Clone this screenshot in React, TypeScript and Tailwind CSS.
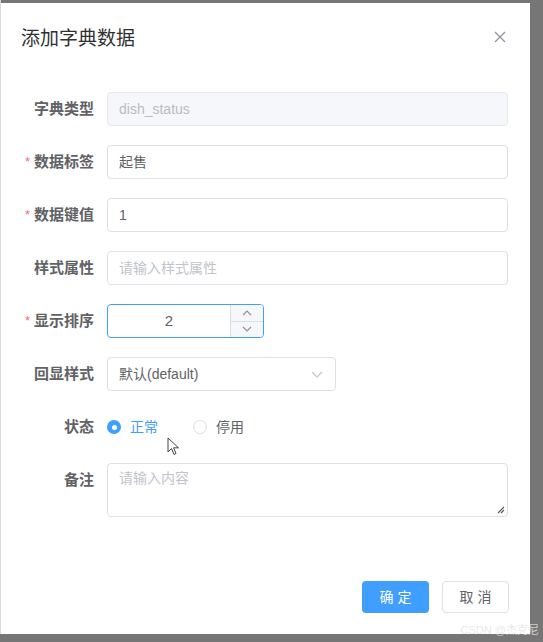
import React from "react";

const font = "font-['Liberation_Sans','Noto_Sans_CJK_SC',sans-serif]";

const Label: React.FC<{ text: string; required?: boolean }> = ({ text, required }) => (
  <div className="w-[106px] shrink-0 pr-[13px] flex justify-end items-center text-[15px] font-bold text-[#606266]">
    {required && <span className="text-[#f56c6c] mr-[4px] text-[13px] font-normal">*</span>}
    {text}
  </div>
);

const Row: React.FC<{ children: React.ReactNode; className?: string }> = ({ children, className }) => (
  <div className={"flex h-[34px] mb-[19px] " + (className || "")}>{children}</div>
);

const TextInput: React.FC<{ value?: string; placeholder?: string; disabled?: boolean }> = ({
  value,
  placeholder,
  disabled,
}) => (
  <div
    className={
      "w-[401px] h-[34px] rounded-[4px] border flex items-center px-[11px] text-[14px] " +
      (disabled ? "bg-[#f5f7fa] border-[#e4e7ed] text-[#b9bcc2]" : "bg-white border-[#dcdfe6] text-[#606266]")
    }
  >
    {value ? value : <span className="text-[#c0c4cc]">{placeholder}</span>}
  </div>
);

export default function App() {
  return (
    <div className={"relative w-[543px] h-[642px] bg-[#767676] overflow-hidden " + font}>
      <div className="absolute left-0 top-0 w-[1px] h-[634px] bg-[#d9d9d9]" />
      <div className="ml-[1px] mt-[3px] w-[529px] h-[631px] bg-white flex flex-col">
        <div className="relative h-[89px] pt-[25px] pl-[20px]">
          <div className="text-[19px] leading-[22px] text-[#303133]">添加字典数据</div>
          <svg className="absolute right-[24px] top-[28px]" width="12" height="12" viewBox="0 0 12 12">
            <path d="M1 1 L11 11 M11 1 L1 11" stroke="#909399" strokeWidth="1.3" />
          </svg>
        </div>

        <Row>
          <Label text="字典类型" />
          <TextInput value="dish_status" disabled />
        </Row>
        <Row>
          <Label text="数据标签" required />
          <TextInput value="起售" />
        </Row>
        <Row>
          <Label text="数据键值" required />
          <TextInput value="1" />
        </Row>
        <Row>
          <Label text="样式属性" />
          <TextInput placeholder="请输入样式属性" />
        </Row>
        <Row>
          <Label text="显示排序" required />
          <div className="w-[157px] h-[34px] rounded-[4px] border border-[#409eff] flex overflow-hidden">
            <div className="flex-1 flex items-center justify-center text-[15px] text-[#606266]">2</div>
            <div className="w-[33px] flex flex-col border-l border-[#dcdfe6] bg-[#f5f7fa]">
              <div className="flex-1 flex items-center justify-center border-b border-[#dcdfe6]">
                <svg width="10" height="6" viewBox="0 0 10 6">
                  <path d="M1 5 L5 1 L9 5" fill="none" stroke="#909399" strokeWidth="1.2" />
                </svg>
              </div>
              <div className="flex-1 flex items-center justify-center">
                <svg width="10" height="6" viewBox="0 0 10 6">
                  <path d="M1 1 L5 5 L9 1" fill="none" stroke="#909399" strokeWidth="1.2" />
                </svg>
              </div>
            </div>
          </div>
        </Row>
        <Row>
          <Label text="回显样式" />
          <div className="w-[229px] h-[34px] rounded-[4px] border border-[#dcdfe6] flex items-center justify-between pl-[11px] pr-[12px] text-[14px] text-[#606266]">
            <span>默认(default)</span>
            <svg width="12" height="7" viewBox="0 0 12 7">
              <path d="M1 1 L6 6 L11 1" fill="none" stroke="#c0c4cc" strokeWidth="1.2" />
            </svg>
          </div>
        </Row>
        <Row>
          <Label text="状态" />
          <div className="flex items-center text-[14px]">
            <span className="w-[14px] h-[14px] rounded-full bg-[#409eff] flex items-center justify-center">
              <span className="w-[5px] h-[5px] rounded-full bg-white" />
            </span>
            <span className="ml-[9px] text-[#409eff]">正常</span>
            <span className="ml-[35px] w-[14px] h-[14px] rounded-full border border-[#dcdfe6] bg-white" />
            <span className="ml-[9px] text-[#606266]">停用</span>
          </div>
        </Row>
        <div className="flex">
          <div className="w-[106px] shrink-0 pr-[13px] pt-[6px] flex justify-end text-[15px] font-bold text-[#606266]">
            备注
          </div>
          <div className="relative w-[401px] h-[54px] rounded-[4px] border border-[#dcdfe6] px-[11px] pt-[4px] text-[14px] text-[#c0c4cc]">
            请输入内容
            <svg className="absolute right-[2px] bottom-[2px]" width="8" height="8" viewBox="0 0 8 8">
              <path d="M7 1 L1 7 M7 4 L4 7" stroke="#555" strokeWidth="1.1" />
            </svg>
          </div>
        </div>

        <div className="flex justify-end gap-[13px] pr-[21px] mt-[64px]">
          <button className="w-[67px] h-[32px] rounded-[4px] bg-[#409eff] text-white text-[14px] tracking-[4px] pl-[4px]">
            确定
          </button>
          <button className="w-[67px] h-[32px] rounded-[4px] border border-[#dcdfe6] bg-white text-[#606266] text-[14px] tracking-[4px] pl-[4px]">
            取消
          </button>
        </div>
      </div>

      <svg className="absolute left-[167px] top-[437px]" width="13" height="19" viewBox="0 0 13 19">
        <path d="M1 1 L1 15 L4.5 11.5 L7 17.5 L9 16.5 L6.6 10.8 L11.5 10.8 Z" fill="white" stroke="#444" strokeWidth="1" strokeLinejoin="round" />
      </svg>

      <div className="absolute right-[4px] bottom-[4px] text-[11px] text-[#e6e6e6] opacity-80">CSDN @杰克尼</div>
    </div>
  );
}
